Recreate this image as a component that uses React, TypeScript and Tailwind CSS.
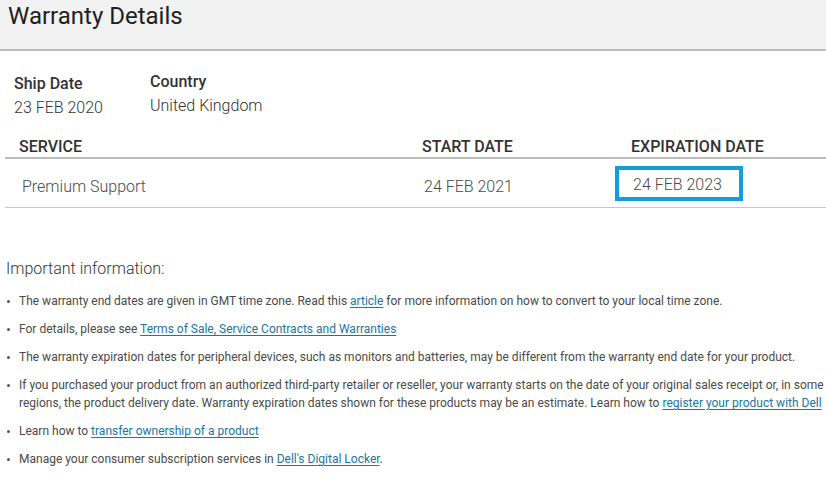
export default function App() {
  const link = "text-[#1a76a3] underline underline-offset-2";
  return (
    <div className="w-[826px] h-[486px] bg-white font-['Roboto',sans-serif] overflow-hidden">
      {/* page header */}
      <div className="h-[51px] bg-[#f2f2f2] border-b-2 border-[#bcbcbc]">
        <h1 className="pl-2 pt-[2px] text-[24px] leading-[28px] text-[#1f1f1f]">Warranty Details</h1>
      </div>

      {/* ship info */}
      <div className="flex mt-[21px] text-[16px] leading-[23px]">
        <div className="pl-[14px] w-[150px]">
          <div className="font-medium text-[#333] leading-[24px]">Ship Date</div>
          <div className="font-light text-[#333]">23 FEB 2020</div>
        </div>
        <div className="-mt-[2px]">
          <div className="font-medium text-[#333] leading-[24px]">Country</div>
          <div className="font-light text-[#333]">United Kingdom</div>
        </div>
      </div>

      {/* table */}
      <div className="ml-[5px] mt-[14px] text-[16px]">
        <div className="flex h-[26px] leading-[28px] border-b-2 border-[#bdbdbd] font-medium text-[#333]">
          <div className="w-[408px] pl-[14px]">SERVICE</div>
          <div className="w-[202px] pl-[9px]">START DATE</div>
          <div className="pl-[16px]">EXPIRATION DATE</div>
        </div>
        <div className="flex items-start h-[49px] border-b border-[#c8c8c8] font-light text-[#4a4a4a] leading-[24px]">
          <div className="w-[408px] pl-[17px] pt-[16px]">Premium Support</div>
          <div className="w-[202px] pl-[11px] pt-[16px]">24 FEB 2021</div>
          <div className="flex items-center mt-[7px] w-[128px] h-[35px] pl-[14px] border-4 border-[#0fa0dc]">
            <span className="pt-[2px]">24 FEB 2023</span>
          </div>
        </div>
      </div>

      {/* important information */}
      <div className="mt-[49px] pl-[6px] text-[16px] leading-[24px] font-light text-[#333]">Important information:</div>
      <ul className="mt-[11px] flex flex-col gap-[10px] text-[12px] leading-[18px] text-[#4a4a4a]">
        {[
          <>The warranty end dates are given in GMT time zone. Read this <a className={link}>article</a> for more information on how to convert to your local time zone.</>,
          <>For details, please see <a className={link}>Terms of Sale, Service Contracts and Warranties</a></>,
          <>The warranty expiration dates for peripheral devices, such as monitors and batteries, may be different from the warranty end date for your product.</>,
          <>If you purchased your product from an authorized third-party retailer or reseller, your warranty starts on the date of your original sales receipt or, in some regions, the product delivery date. Warranty expiration dates shown for these products may be an estimate. Learn how to <a className={link}>register your product with Dell</a></>,
          <>Learn how to <a className={link}>transfer ownership of a product</a></>,
          <>Manage your consumer subscription services in <a className={link}>Dell's Digital Locker</a>.</>,
        ].map((c, i) => (
          <li key={i} className="flex">
            <span className="w-[19px] shrink-0 flex justify-start pl-[7px] pt-[8px]">
              <span className="block w-[3px] h-[3px] rounded-full bg-[#555]" />
            </span>
            <span className="pr-[2px]">{c}</span>
          </li>
        ))}
      </ul>
    </div>
  );
}
